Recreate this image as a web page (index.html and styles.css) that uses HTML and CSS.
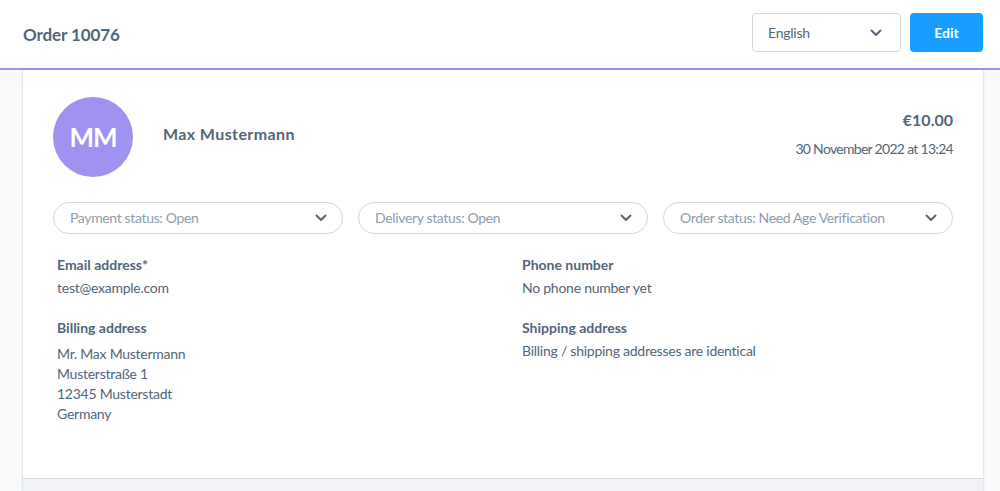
FILE: index.html
```html
<!DOCTYPE html>
<html lang="en">
<head>
<meta charset="utf-8">
<title>Order 10076</title>
<link rel="stylesheet" href="styles.css">
</head>
<body>
<header class="topbar">
  <h1 class="title">Order 10076</h1>
  <div class="lang-select">
    <span>English</span>
    <svg class="chev" width="12" height="8" viewBox="0 0 12 8"><path d="M1.5 1.5l4.5 4.5 4.5-4.5" fill="none" stroke="#52667a" stroke-width="2" stroke-linecap="round" stroke-linejoin="round"/></svg>
  </div>
  <button class="btn-edit">Edit</button>
</header>
<main class="page">
  <section class="card">
    <div class="card-body">
      <div class="summary">
        <div class="avatar">MM</div>
        <div class="name">Max Mustermann</div>
        <div class="meta">
          <div class="price">€10.00</div>
          <div class="date">30 November 2022 at 13:24</div>
        </div>
      </div>
      <div class="states">
        <div class="state"><span>Payment status: Open</span><svg class="chev" width="12" height="8" viewBox="0 0 12 8"><path d="M1.5 1.5l4.5 4.5 4.5-4.5" fill="none" stroke="#52667a" stroke-width="2" stroke-linecap="round" stroke-linejoin="round"/></svg></div>
        <div class="state"><span>Delivery status: Open</span><svg class="chev" width="12" height="8" viewBox="0 0 12 8"><path d="M1.5 1.5l4.5 4.5 4.5-4.5" fill="none" stroke="#52667a" stroke-width="2" stroke-linecap="round" stroke-linejoin="round"/></svg></div>
        <div class="state"><span>Order status: Need Age Verification</span><svg class="chev" width="12" height="8" viewBox="0 0 12 8"><path d="M1.5 1.5l4.5 4.5 4.5-4.5" fill="none" stroke="#52667a" stroke-width="2" stroke-linecap="round" stroke-linejoin="round"/></svg></div>
      </div>
      <div class="details">
        <div class="field">
          <div class="label">Email address*</div>
          <div class="value">test@example.com</div>
        </div>
        <div class="field">
          <div class="label">Phone number</div>
          <div class="value">No phone number yet</div>
        </div>
        <div class="field">
          <div class="label">Billing address</div>
          <div class="address">Mr. Max Mustermann<br>Musterstraße 1<br>12345 Musterstadt<br>Germany</div>
        </div>
        <div class="field">
          <div class="label">Shipping address</div>
          <div class="value">Billing / shipping addresses are identical</div>
        </div>
      </div>
    </div>
    <div class="card-foot"></div>
  </section>
</main>
</body>
</html>
```
FILE: styles.css
```css
* { box-sizing: border-box; }
html, body { height: 100%; }
body {
  margin: 0;
  background: #f9fafb;
  font-family: "Lato", "Liberation Sans", sans-serif;
  color: #52667a;
  overflow: hidden;
}
.topbar {
  height: 70px;
  display: flex;
  align-items: center;
  padding: 0 17px 3px 23px;
  background: #fff;
  border-bottom: 2px solid #a092f0;
}
.title {
  margin: 3px auto 0 0;
  font-size: 17px;
  font-weight: 700;
  letter-spacing: -0.1px;
  color: #52667a;
}
.lang-select {
  width: 149px;
  height: 39px;
  border: 1px solid #d1d9e0;
  border-radius: 4px;
  display: flex;
  align-items: center;
  justify-content: space-between;
  padding: 0 18px 0 15px;
  font-size: 14px;
  letter-spacing: -0.25px;
  color: #52667a;
}
.btn-edit {
  margin-left: 9px;
  width: 73px;
  height: 39px;
  border: 0;
  border-radius: 4px;
  background: #189eff;
  color: #fff;
  font-family: inherit;
  font-size: 14px;
  font-weight: 700;
}
.page {
  padding: 0 16px 0 22px;
  height: calc(100% - 70px);
}
.card {
  height: 100%;
  background: #fff;
  border-left: 1px solid #e3e8ed;
  border-right: 1px solid #e3e8ed;
  box-shadow: 0 0 3px rgba(0, 0, 0, 0.06);
  display: flex;
  flex-direction: column;
}
.card-body {
  padding: 27px 30px 54px 30px;
}
.summary {
  display: flex;
  align-items: center;
}
.avatar {
  width: 80px;
  height: 80px;
  border-radius: 50%;
  background: #a092f0;
  color: #fff;
  font-size: 26px;
  font-weight: 700;
  letter-spacing: -1px;
  display: flex;
  align-items: center;
  justify-content: center;
  flex-shrink: 0;
}
.name {
  margin-left: 30px;
  margin-top: -7px;
  font-size: 16px;
  font-weight: 700;
  letter-spacing: 0.4px;
}
.meta {
  margin-left: auto;
  align-self: flex-start;
  padding-top: 11px;
  text-align: right;
}
.price {
  font-size: 16px;
  font-weight: 700;
  line-height: 24px;
}
.date {
  margin-top: 7px;
  font-size: 14px;
  line-height: 20px;
  letter-spacing: -0.7px;
}
.states {
  margin-top: 25px;
  display: grid;
  grid-template-columns: repeat(3, 1fr);
  gap: 15px;
}
.state {
  height: 32px;
  border: 1px solid #d1d9e0;
  border-radius: 16px;
  display: flex;
  align-items: center;
  justify-content: space-between;
  padding: 0 15px 2px 16px;
  font-size: 14px;
  letter-spacing: -0.35px;
  color: #8d9dad;
}
.state .chev { margin-top: 2px; }
.details {
  margin-top: 21px;
  display: grid;
  grid-template-columns: 1fr 1fr;
  column-gap: 38px;
  row-gap: 20px;
  padding: 0 4px;
}
.label {
  font-size: 14px;
  line-height: 20px;
  font-weight: 700;
}
.value {
  margin-top: 3px;
  font-size: 14px;
  line-height: 20px;
  letter-spacing: -0.25px;
}
.address {
  margin-top: 6px;
  font-size: 14px;
  line-height: 20px;
  letter-spacing: -0.25px;
}
.card-foot {
  flex: 1;
  border-top: 1px solid #d1d9e0;
  background: #f0f2f5;
}
```
